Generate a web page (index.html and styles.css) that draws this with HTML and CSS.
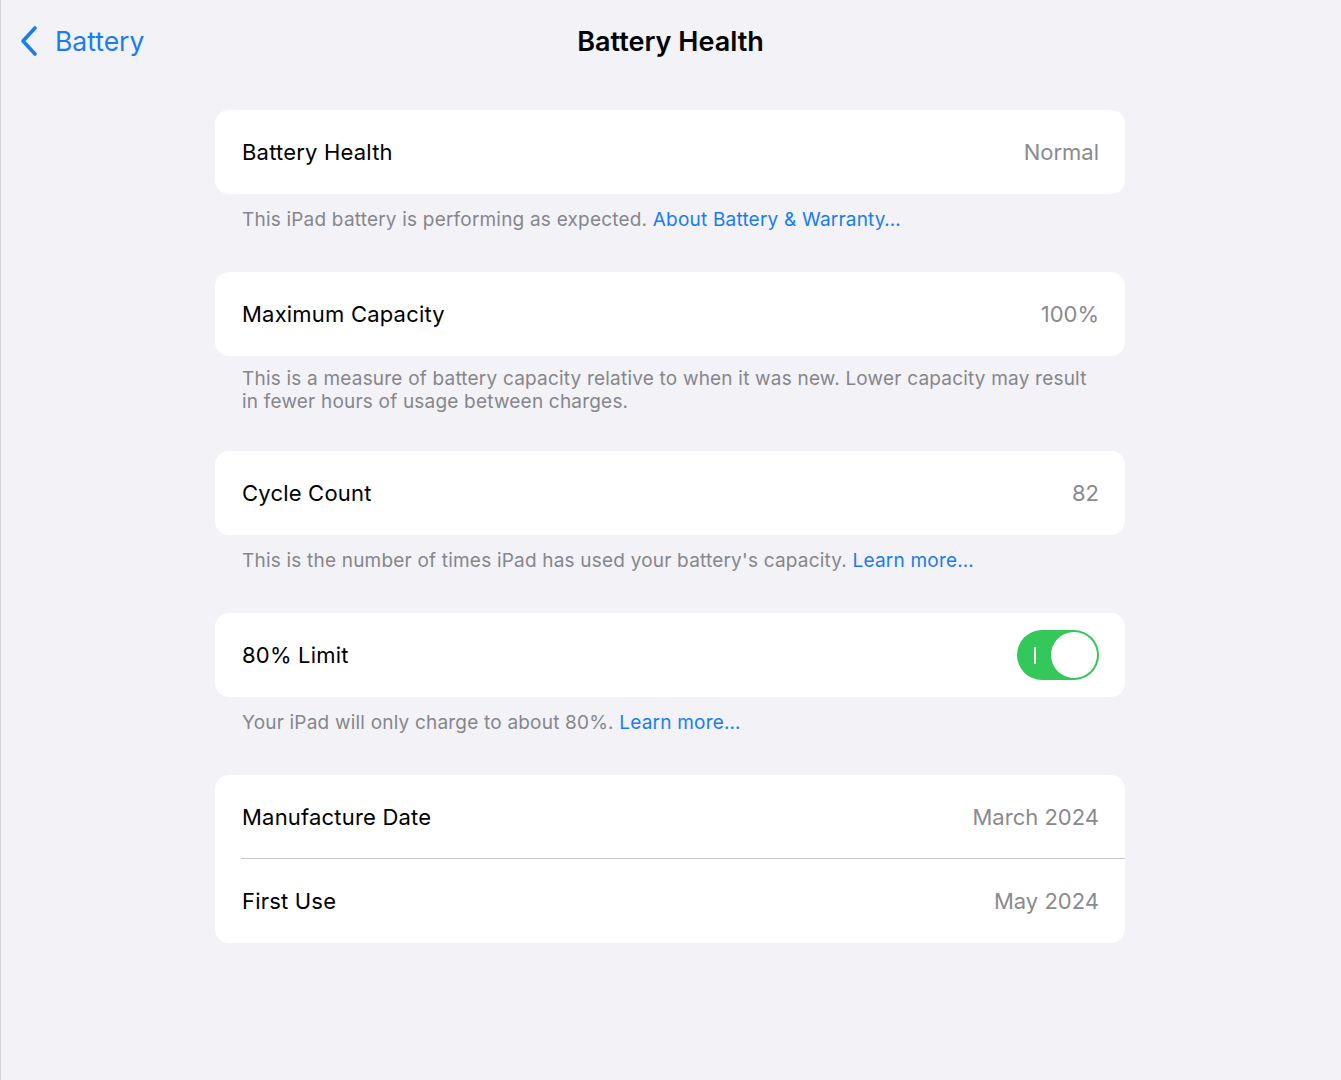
FILE: index.html
```html
<!DOCTYPE html>
<html lang="en">
<head>
  <meta charset="UTF-8" />
  <meta name="viewport" content="width=device-width, initial-scale=1.0" />
  <title>Battery Health</title>
  <link rel="stylesheet" href="styles.css">
</head>
<body>
  <div class="navbar">
    <a class="back" href="#">
      <svg class="chevron" width="20" height="32" viewBox="0 0 20 32">
        <path d="M16 3 L4 16 L16 29" fill="none" stroke="#1a7cf3" stroke-width="3.6" stroke-linecap="round" stroke-linejoin="round"/>
      </svg>
      <span>Battery</span>
    </a>
    <h1>Battery Health</h1>
  </div>

  <div class="content">
    <div class="card">
      <div class="row">
        <span class="label">Battery Health</span>
        <span class="value">Normal</span>
      </div>
    </div>
    <p class="footer">This iPad battery is performing as expected. <a href="#">About Battery &amp; Warranty…</a></p>

    <div class="card">
      <div class="row">
        <span class="label">Maximum Capacity</span>
        <span class="value">100%</span>
      </div>
    </div>
    <p class="footer multi">This is a measure of battery capacity relative to when it was new. Lower capacity may result in fewer hours of usage between charges.</p>

    <div class="card">
      <div class="row">
        <span class="label">Cycle Count</span>
        <span class="value">82</span>
      </div>
    </div>
    <p class="footer">This is the number of times iPad has used your battery's capacity. <a href="#">Learn more…</a></p>

    <div class="card">
      <div class="row">
        <span class="label">80% Limit</span>
        <div class="toggle on">
          <span class="toggle-mark"></span>
          <span class="knob"></span>
        </div>
      </div>
    </div>
    <p class="footer">Your iPad will only charge to about 80%. <a href="#">Learn more…</a></p>

    <div class="card">
      <div class="row">
        <span class="label">Manufacture Date</span>
        <span class="value">March 2024</span>
      </div>
      <div class="row">
        <span class="label">First Use</span>
        <span class="value">May 2024</span>
      </div>
    </div>
  </div>
</body>
</html>
```

FILE: styles.css
```css
body {
  margin: 0;
  min-height: 1080px;
  background: #f2f2f7;
  box-shadow: inset 1px 0 0 #d4d4d9;
  font-family: Inter, "Noto Sans", sans-serif;
  color: #000;
  -webkit-font-smoothing: antialiased;
}

.navbar {
  height: 82px;
  display: flex;
  align-items: center;
  justify-content: center;
  position: relative;
}
.navbar h1 {
  margin: 0;
  font-size: 27px;
  font-weight: 600;
  letter-spacing: 0;
  color: #000;
}
.back {
  position: absolute;
  left: 19px;
  top: 25px;
  display: flex;
  align-items: center;
  gap: 16px;
  color: #1a7cf3;
  text-decoration: none;
  font-size: 26.5px;
}
.chevron { display: block; }

.content {
  width: 910px;
  margin: 0 0 0 215px;
  padding-top: 28px;
}

.card {
  background: #fff;
  border-radius: 14px;
  overflow: hidden;
}
.row {
  height: 84px;
  display: flex;
  align-items: center;
  justify-content: space-between;
  padding: 0 26px 0 27px;
  position: relative;
}
.row + .row::before {
  content: "";
  position: absolute;
  top: -1px;
  left: 26px;
  right: 0;
  height: 1px;
  background: #c8c8cc;
}
.label {
  font-size: 22px;
  letter-spacing: 0.2px;
}
.value {
  font-size: 22px;
  color: #8a8a8e;
}

.footer {
  margin: 0 0 41px;
  padding: 14px 28px 0 27px;
  font-size: 19px;
  letter-spacing: 0.2px;
  line-height: 23px;
  color: #86868b;
}
.footer.multi {
  padding-top: 11px;
  margin-bottom: 38px;
}
.footer a {
  color: #1a7cf3;
  text-decoration: none;
}

.toggle {
  width: 82px;
  height: 50px;
  border-radius: 25px;
  background: #34c759;
  position: relative;
}
.toggle-mark {
  position: absolute;
  left: 17px;
  top: 17px;
  width: 2px;
  height: 17px;
  background: #fff;
  border-radius: 1px;
}
.knob {
  position: absolute;
  right: 2px;
  top: 2px;
  width: 46px;
  height: 46px;
  border-radius: 50%;
  background: #fff;
}
```
